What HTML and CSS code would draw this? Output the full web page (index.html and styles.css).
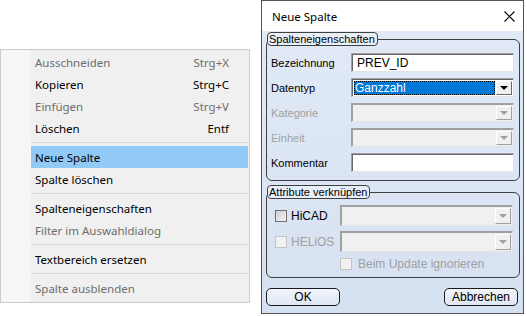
FILE: index.html
```html
<!DOCTYPE html>
<html lang="de">
<head>
    <meta charset="UTF-8">
    <title>Neue Spalte</title>
    <link rel="stylesheet" href="styles.css">
</head>
<body>
    <div class="menu">
        <div class="menu-item disabled"><span>Ausschneiden</span><span>Strg+X</span></div>
        <div class="menu-item"><span>Kopieren</span><span>Strg+C</span></div>
        <div class="menu-item disabled"><span>Einfügen</span><span>Strg+V</span></div>
        <div class="menu-item"><span>Löschen</span><span>Entf</span></div>
        <div class="menu-sep"></div>
        <div class="menu-item active"><span>Neue Spalte</span></div>
        <div class="menu-item"><span>Spalte löschen</span></div>
        <div class="menu-sep"></div>
        <div class="menu-item"><span>Spalteneigenschaften</span></div>
        <div class="menu-item disabled"><span>Filter im Auswahldialog</span></div>
        <div class="menu-sep"></div>
        <div class="menu-item"><span>Textbereich ersetzen</span></div>
        <div class="menu-sep"></div>
        <div class="menu-item disabled"><span>Spalte ausblenden</span></div>
    </div>

    <div class="dialog">
        <div class="titlebar">
            <span class="title">Neue Spalte</span>
            <svg class="close" width="11" height="11" viewBox="0 0 11 11">
                <path d="M0.5 0.5 L10.5 10.5 M10.5 0.5 L0.5 10.5" stroke="#000" stroke-width="1.1" fill="none"/>
            </svg>
        </div>

        <div class="dialog-body">
            <fieldset class="group">
                <legend>Spalteneigenschaften</legend>
                <div class="form-grid">
                    <label>Bezeichnung</label>
                    <div class="field textbox">PREV_ID</div>

                    <label>Datentyp</label>
                    <div class="field combo">
                        <span class="combo-value selected">Ganzzahl</span>
                        <span class="combo-btn"><i class="arrow"></i></span>
                    </div>

                    <label class="disabled">Kategorie</label>
                    <div class="field combo off">
                        <span class="combo-value"></span>
                        <span class="combo-btn"><i class="arrow"></i></span>
                    </div>

                    <label class="disabled">Einheit</label>
                    <div class="field combo off">
                        <span class="combo-value"></span>
                        <span class="combo-btn"><i class="arrow"></i></span>
                    </div>

                    <label>Kommentar</label>
                    <div class="field textbox"></div>
                </div>
            </fieldset>

            <fieldset class="group">
                <legend>Attribute verknüpfen</legend>
                <div class="link-grid">
                    <div class="check"><span class="box"></span>HiCAD</div>
                    <div class="field combo off tall">
                        <span class="combo-value"></span>
                        <span class="combo-btn"><i class="arrow"></i></span>
                    </div>

                    <div class="check disabled"><span class="box"></span>HELiOS</div>
                    <div class="field combo off tall">
                        <span class="combo-value"></span>
                        <span class="combo-btn"><i class="arrow"></i></span>
                    </div>

                    <div></div>
                    <div class="check disabled small"><span class="box"></span>Beim Update ignorieren</div>
                </div>
            </fieldset>

            <div class="buttons">
                <button class="btn">OK</button>
                <button class="btn">Abbrechen</button>
            </div>
        </div>
    </div>
</body>
</html>
```

FILE: styles.css
```css
:root {
    --menu-bg: #f0f0f0;
    --menu-border: #cccccc;
    --menu-hover: #91c9f7;
    --menu-disabled: #6d6d6d;
    --frame: #555555;
    --disabled: #a0a0a0;
}

* {
    margin: 0;
    padding: 0;
    box-sizing: border-box;
}

body {
    width: 527px;
    height: 316px;
    background: #fff;
    display: flex;
    align-items: flex-start;
    gap: 11px;
    font-family: "Noto Sans", sans-serif;
    overflow: hidden;
}

/* context menu */

.menu {
    width: 250px;
    margin-top: 49px;
    padding: 1px 0 3px;
    border: 1px solid var(--menu-border);
    background: linear-gradient(to right, #f6f6f6 30px, var(--menu-bg) 30px);
    font-size: 11.5px;
}

.menu-item {
    height: 22px;
    margin: 0 1px 0 30px;
    padding: 0 19px 0 4px;
    display: flex;
    align-items: center;
    justify-content: space-between;
    color: #000;
}

.menu-item.disabled {
    color: var(--menu-disabled);
}

.menu-item.active {
    background-color: var(--menu-hover);
}

.menu-sep {
    height: 7px;
    margin: 0 1px 0 30px;
    display: flex;
    align-items: center;
}

.menu-sep::after {
    content: "";
    flex: 1;
    height: 1px;
    background-color: #d7d7d7;
}

/* dialog */

.dialog {
    width: 263px;
    height: 314px;
    border: 1px solid var(--frame);
    background: linear-gradient(#e2eaf6, #d6e1f1);
    display: flex;
    flex-direction: column;
    font-family: "Liberation Sans", sans-serif;
    font-size: 11px;
}

.titlebar {
    height: 30px;
    background: #fff;
    display: flex;
    align-items: center;
    justify-content: space-between;
    padding: 0 8px 0 10px;
}

.title {
    font-family: "Noto Sans", sans-serif;
    font-size: 11.5px;
}

.dialog-body {
    flex: 1;
    padding: 1px 3px 0 4px;
}

.group {
    border: 1px solid #404040;
    border-radius: 6px;
    padding: 0;
    margin: 0;
}

.group + .group {
    margin-top: 4px;
}

.group legend {
    margin-left: 0;
    padding: 0 2px 0 1px;
    height: 14px;
    line-height: 12px;
    border: 1px solid #404040;
    border-radius: 4px;
    background: #e9eff8;
    font-size: 11px;
}

.form-grid {
    display: grid;
    grid-template-columns: 80px 163px;
    row-gap: 6px;
    align-items: center;
    padding: 7px 5px 8px 4px;
}

.form-grid label {
    color: #000;
}

.form-grid label.disabled,
.disabled {
    color: var(--disabled);
}

.field {
    height: 19px;
    border-style: solid;
    border-width: 1px;
    border-color: #a0a0a0 #e3e3e3 #e3e3e3 #a0a0a0;
    box-shadow: inset 1px 1px 0 #696969;
    background: #fff;
}

.textbox {
    padding: 2px 0 0 5px;
    font-size: 12px;
    line-height: 14px;
}

.combo {
    display: flex;
    padding: 2px 1px 1px 2px;
}

.combo.off {
    background: #f0f0f0;
    box-shadow: inset 1px 1px 0 #a0a0a0;
}

.combo-value {
    flex: 1;
    height: 100%;
    font-size: 12px;
    line-height: 14px;
    color: #fff;
}

.combo-value.selected {
    background: #0078d7;
    outline: 1px dotted #000;
    outline-offset: -1px;
    padding-left: 1px;
}

.combo-btn {
    width: 16px;
    margin-left: 1px;
    background: #f0f0f0;
    border: 1px solid;
    border-color: #fff #696969 #696969 #fff;
    display: flex;
    align-items: center;
    justify-content: center;
}

.combo.off .combo-btn {
    border-color: #fff #a0a0a0 #a0a0a0 #fff;
}

.arrow {
    width: 0;
    height: 0;
    border-left: 4px solid transparent;
    border-right: 4px solid transparent;
    border-top: 4px solid #000;
}

.combo.off .arrow {
    border-top-color: #a0a0a0;
}

.link-grid {
    display: grid;
    grid-template-columns: 65px 173px;
    row-gap: 5px;
    align-items: center;
    padding: 6px 5px 6px 8px;
}

.combo.tall {
    height: 21px;
}

.check {
    display: flex;
    align-items: center;
    gap: 4px;
    font-size: 12px;
}

.check .box {
    width: 12px;
    height: 12px;
    border: 1px solid #707070;
    background: linear-gradient(135deg, #cfcfcf, #f4f4f4);
}

.check.disabled .box {
    border-color: #c4c4c4;
    background: #f1f1f1;
}

.check.small {
    gap: 6px;
}

.buttons {
    display: flex;
    justify-content: space-between;
    margin-top: 10px;
    padding: 0 2px 0 0;
}

.btn {
    width: 74px;
    height: 18px;
    border: 1px solid #1a1a1a;
    border-radius: 5px;
    background: linear-gradient(#f1f5fb, #dfe7f3);
    font-family: "Liberation Sans", sans-serif;
    font-size: 12px;
    color: #000;
}
```
